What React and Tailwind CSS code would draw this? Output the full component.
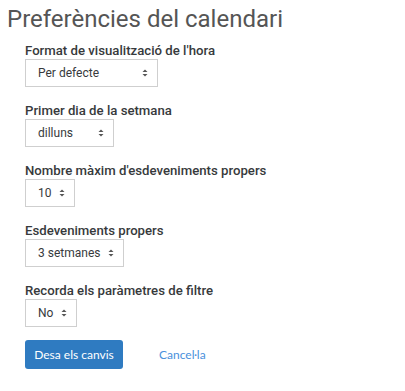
const fields = [
  { label: 'Format de visualització de l\'hora', value: 'Per defecte', width: 'w-[133px]' },
  { label: 'Primer dia de la setmana', value: 'dilluns', width: 'w-[89px]' },
  { label: 'Nombre màxim d\'esdeveniments propers', value: '10', width: 'w-[50px]' },
  { label: 'Esdeveniments propers', value: '3 setmanes', width: 'w-[99px]' },
  { label: 'Recorda els paràmetres de filtre', value: 'No', width: 'w-[52px]' },
];

const Arrows = () => (
  <svg width="6" height="8" viewBox="0 0 6 8" className="shrink-0">
    <path d="M3 0.5 L5.5 3 L0.5 3 Z" fill="#555" />
    <path d="M3 7.5 L5.5 5 L0.5 5 Z" fill="#555" />
  </svg>
);

const SelectBox = ({ value, width }) => (
  <div
    className={`${width} flex h-[28px] items-center justify-between border border-[#cfcfcf] bg-white pl-[12px] pr-[9px] text-[12px] text-[#373a3c]`}
  >
    <span>{value}</span>
    <Arrows />
  </div>
);

export default function App() {
  return (
    <div className="min-h-screen bg-white font-['Roboto',sans-serif]">
      <h2 className="pl-[7px] pt-[5px] text-[24px] font-normal leading-[28px] text-[#555555]">
        Preferències del calendari
      </h2>
      <div className="flex flex-col gap-[16px] pl-[25px] pt-[10px]">
        {fields.map((f) => (
          <div key={f.label} className="flex flex-col">
            <label className="text-[13.2px] font-medium leading-[16px] text-[#373a3c]">{f.label}</label>
            <SelectBox value={f.value} width={f.width} />
          </div>
        ))}
      </div>
      <div className="flex items-center gap-[36px] pl-[25px] pt-[13px] font-['Lato',sans-serif] text-[12px]">
        <button
          type="button"
          className="h-[29px] w-[98px] rounded-[3px] bg-[#2f7bc1] text-white"
        >
          Desa els canvis
        </button>
        <a href="#" className="text-[#4a90dc]">
          Cancel·la
        </a>
      </div>
    </div>
  );
}
